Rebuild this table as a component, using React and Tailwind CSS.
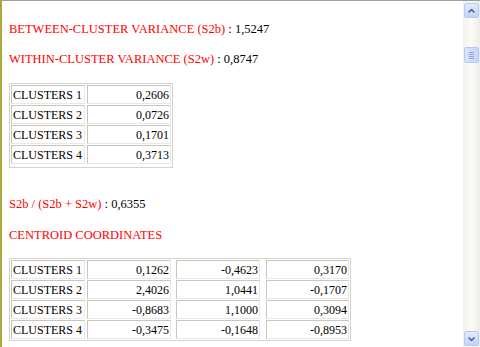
import React from "react";

const serif = { fontFamily: '"Liberation Serif", "Times New Roman", serif' };

function Cell({ children, w, right, className = "" }) {
  return (
    <div
      className={`h-[19px] border border-t-[#c9c7bd] border-l-[#c9c7bd] border-r-[#eae8e0] border-b-[#eae8e0] flex items-center leading-[14px] text-[12px] text-black px-[1px] ${right ? "justify-end" : ""} ${w} ${className}`}
    >
      {children}
    </div>
  );
}

function ArrowUp() {
  return (
    <svg width="7" height="4" viewBox="0 0 7 4">
      <path d="M0.5 3.5 L3.5 0.5 L6.5 3.5" fill="none" stroke="#4d6185" strokeWidth="1.5" />
    </svg>
  );
}
function ArrowDown() {
  return (
    <svg width="7" height="4" viewBox="0 0 7 4">
      <path d="M0.5 0.5 L3.5 3.5 L6.5 0.5" fill="none" stroke="#4d6185" strokeWidth="1.5" />
    </svg>
  );
}

export default function App() {
  const t1 = [
    ["CLUSTERS 1", "0,2606"],
    ["CLUSTERS 2", "0,0726"],
    ["CLUSTERS 3", "0,1701"],
    ["CLUSTERS 4", "0,3713"],
  ];
  const t2 = [
    ["CLUSTERS 1", "0,1262", "-0,4623", "0,3170"],
    ["CLUSTERS 2", "2,4026", "1,0441", "-0,1707"],
    ["CLUSTERS 3", "-0,8683", "1,1000", "0,3094"],
    ["CLUSTERS 4", "-0,3475", "-0,1648", "-0,8953"],
  ];
  return (
    <div
      className="w-[480px] h-[347px] bg-white flex border-t border-t-[#a09f9a] border-l-2 border-l-[#a9a83c] overflow-hidden"
      style={serif}
    >
      <div className="flex-1 flex flex-col pl-[7px] pt-[21px] text-[12.5px] leading-[14px]">
        <div>
          <span className="text-[#ff0000]">BETWEEN-CLUSTER VARIANCE (S2b)</span>
          <span className="text-black"> : 1,5247</span>
        </div>
        <div className="mt-[16px]">
          <span className="text-[#ff0000]">WITHIN-CLUSTER VARIANCE (S2w)</span>
          <span className="text-black"> : 0,8747</span>
        </div>
        <div className="mt-[17px] self-start border border-[#d6d3c9] p-[1px] pb-[3px] flex flex-col gap-[1px]">
          {t1.map((r) => (
            <div key={r[0]} className="flex gap-[2px]">
              <Cell w="w-[74px]">{r[0]}</Cell>
              <Cell w="w-[84px]" right>{r[1]}</Cell>
            </div>
          ))}
        </div>
        <div className="mt-[29px]">
          <span className="text-[#ff0000]">S2b / (S2b + S2w)</span>
          <span className="text-black"> : 0,6355</span>
        </div>
        <div className="mt-[17px]">
          <span className="text-[#ff0000]">CENTROID COORDINATES</span>
        </div>
        <div className="mt-[16px] self-start border border-[#d6d3c9] p-[1px] flex flex-col gap-[1px]">
          {t2.map((r) => (
            <div key={r[0]} className="flex">
              <Cell w="w-[74px]">{r[0]}</Cell>
              <Cell w="w-[84px]" right className="ml-[2px]">{r[1]}</Cell>
              <Cell w="w-[84px]" right className="ml-[5px]">{r[2]}</Cell>
              <Cell w="w-[83px]" right className="ml-[6px]">{r[3]}</Cell>
            </div>
          ))}
        </div>
      </div>
      <div className="w-[17px] h-full flex flex-col bg-gradient-to-r from-[#f3f2ec] via-[#fbfbf8] to-[#eeede5] pt-[2px] pb-[1px]">
        <div className="mx-auto w-[15px] h-[15px] rounded-[2px] border border-[#b7c9f2] bg-gradient-to-b from-[#e3ebfe] to-[#c2d2fb] flex items-center justify-center">
          <ArrowUp />
        </div>
        <div className="mt-[29px] mx-auto w-[15px] h-[16px] rounded-[2px] border border-[#b7c9f2] bg-gradient-to-r from-[#dbe5fd] to-[#c6d5fb] flex flex-col items-center justify-center gap-[1px]">
          <div className="w-[5px] h-px bg-[#8fa6dc]" />
          <div className="w-[5px] h-px bg-[#8fa6dc]" />
          <div className="w-[5px] h-px bg-[#8fa6dc]" />
          <div className="w-[5px] h-px bg-[#8fa6dc]" />
        </div>
        <div className="flex-1" />
        <div className="mx-auto w-[15px] h-[15px] rounded-[2px] border border-[#b7c9f2] bg-gradient-to-b from-[#e3ebfe] to-[#c2d2fb] flex items-center justify-center">
          <ArrowDown />
        </div>
      </div>
    </div>
  );
}
